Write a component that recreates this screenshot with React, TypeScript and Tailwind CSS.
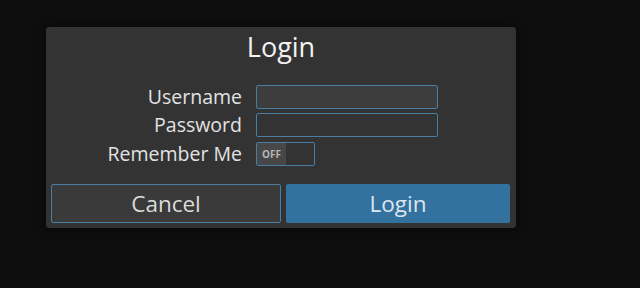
export default function App() {
  return (
    <div
      className="min-h-screen bg-[#0e0e0e] pl-[46px] pt-[27px] text-[#e2e2e2]"
      style={{ fontFamily: '"Open Sans", "Noto Sans", sans-serif' }}
    >
      <div className="flex h-[201px] w-[470px] flex-col rounded-[3px] bg-[#333333] px-[5px] pt-[6px] shadow-[0_0_12px_rgba(0,0,0,0.6)]">
        <h1 className="text-center text-[27px] font-medium leading-[28px] text-[#f2f2f2]">Login</h1>

        <div className="mt-[24px] grid grid-cols-[191px_auto] items-center gap-x-[14px]">
          <label className="text-right text-[19.5px] font-medium leading-[24px]">Username</label>
          <input className="h-[24px] w-[182px] rounded-[2px] border border-[#4a7ea3] bg-[#3d3d3d] outline-none" />

          <label className="mt-[4px] text-right text-[19.5px] font-medium leading-[24px]">Password</label>
          <input
            type="password"
            className="mt-[4px] h-[24px] w-[182px] rounded-[2px] border border-[#4a7ea3] bg-[#333333] outline-none"
          />

          <label className="mt-[5px] text-right text-[19.5px] font-medium leading-[24px]">Remember Me</label>
          <div className="mt-[5px] flex h-[24px] w-[59px] rounded-[2px] border border-[#4a7ea3] bg-[#333333]">
            <span className="flex w-[29px] items-center justify-center bg-[#474747] text-[10px] font-bold text-[#b5b5b5]">
              OFF
            </span>
          </div>
        </div>

        <div className="mt-[18px] flex gap-[5px]">
          <button className="h-[39px] w-[230px] rounded-[2px] border border-[#4a7ea3] bg-[#3a3a3a] text-[22.5px] font-medium text-[#dcdcdc]">
            Cancel
          </button>
          <button className="h-[39px] w-[224px] rounded-[2px] bg-[#33729f] text-[22.5px] font-medium text-[#dde6ee]">
            Login
          </button>
        </div>
      </div>
    </div>
  );
}
